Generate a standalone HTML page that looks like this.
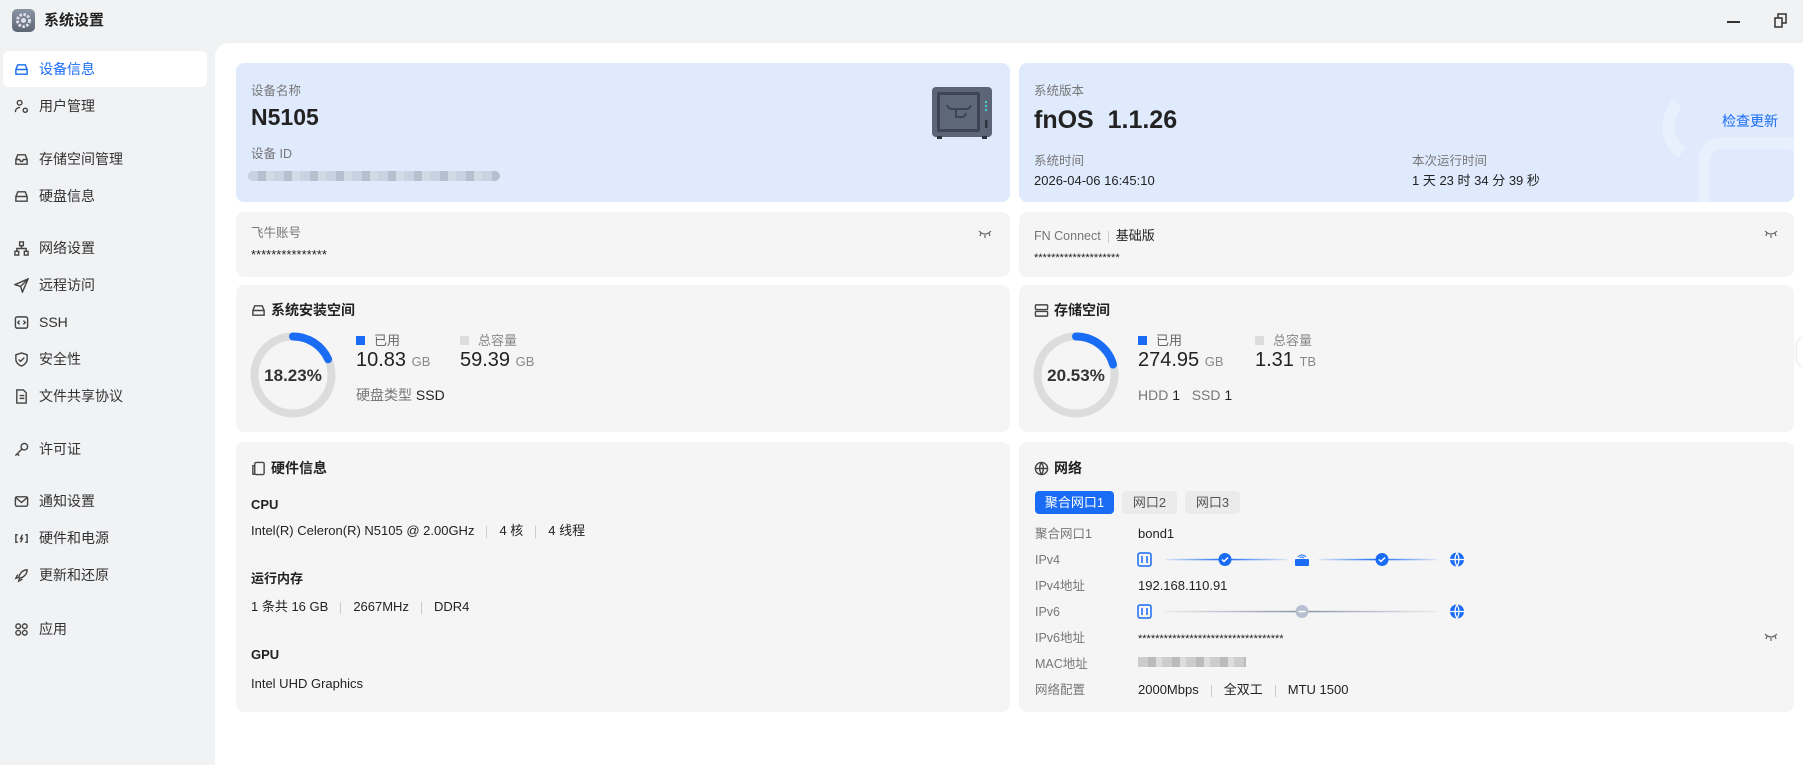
<!DOCTYPE html>
<html><head><meta charset="utf-8"><style>
*{margin:0;padding:0;box-sizing:border-box}
body{width:1803px;height:765px;background:#f1f2f4;font-family:"Liberation Sans","Noto Sans CJK SC",sans-serif;color:#222;position:relative;overflow:hidden;font-size:13px}
.a{position:absolute;white-space:nowrap;line-height:18px}
.side .it{position:absolute;left:3px;width:204px;height:36px;display:flex;align-items:center;padding-left:11px;font-size:14px;color:#333;border-radius:6px}
.side .it svg{width:15px;height:15px;margin-right:10px;stroke:#444;fill:none;stroke-width:1.5}
.side .act{background:#fff;color:#1a6cf5}
.side .act svg{stroke:#1a6cf5}
.main{position:absolute;left:215px;top:43px;width:1588px;height:722px;background:#fff;border-top-left-radius:14px}
.card{position:absolute;background:#f5f5f5;border-radius:8px}
.blue{background:#dfeafd}
.lbl{color:#777;font-size:12.5px}
.ttl{font-weight:bold;font-size:14px;display:flex;align-items:center}
.ttl svg{width:15px;height:15px;margin-right:5px;fill:none;stroke:#444;stroke-width:1.5}
.sep{display:inline-block;width:1px;height:12px;background:#ccc;margin:0 12px;vertical-align:middle}
</style></head><body>
<div class="a" style="left:12px;top:9px;width:23px;height:23px;border-radius:5px;background:linear-gradient(#8a94a3,#5d6675)"><svg width="23" height="23" viewBox="0 0 23 23"><circle cx="11.5" cy="11.5" r="6" fill="none" stroke="#dde" stroke-width="3" stroke-dasharray="2.5 1.5"/><circle cx="11.5" cy="11.5" r="2.5" fill="#dde"/></svg></div>
<div class="a" style="left:44px;top:12px;font-size:15px;font-weight:bold">系统设置</div>
<div class="a" style="left:1727px;top:21px;width:13px;height:1.6px;background:#333"></div>
<svg class="a" style="left:1774px;top:13px" width="13" height="15" viewBox="0 0 13 15" fill="none" stroke="#333" stroke-width="1.5"><rect x="1" y="5" width="7" height="9"/><path d="M4 5V1h8v9H8"/></svg>

<div class="side">
<div class="it act" style="top:51px"><svg viewBox="0 0 16 16"><path d="M2 8l2-5h8l2 5v5H2z M2 8h12"/></svg>设备信息</div>
<div class="it" style="top:88px"><svg viewBox="0 0 16 16"><circle cx="6" cy="4" r="2.5"/><path d="M1.5 14c0-3 2-5 5-5"/><circle cx="12" cy="12" r="2.2"/></svg>用户管理</div>
<div class="it" style="top:141px"><svg viewBox="0 0 16 16"><path d="M2 8l2-5h8l2 5v5H2z M2 8h4l1 2h2l1-2h4"/></svg>存储空间管理</div>
<div class="it" style="top:178px"><svg viewBox="0 0 16 16"><path d="M2 8l2-5h8l2 5v5H2z M2 8h12"/></svg>硬盘信息</div>
<div class="it" style="top:230px"><svg viewBox="0 0 16 16"><rect x="6" y="1" width="4" height="4"/><rect x="1" y="11" width="4" height="4"/><rect x="11" y="11" width="4" height="4"/><path d="M8 5v3M3 11V8h10v3"/></svg>网络设置</div>
<div class="it" style="top:267px"><svg viewBox="0 0 16 16"><path d="M15 1L1 7l6 2 2 6z M7 9l8-8"/></svg>远程访问</div>
<div class="it" style="top:304px"><svg viewBox="0 0 16 16"><rect x="1.5" y="2" width="13" height="12" rx="2"/><path d="M6 6l-2 2 2 2M10 6l2 2-2 2"/></svg>SSH</div>
<div class="it" style="top:341px"><svg viewBox="0 0 16 16"><path d="M8 1l6 2v5c0 3-3 6-6 7-3-1-6-4-6-7V3z M5 8l2 2 4-4"/></svg>安全性</div>
<div class="it" style="top:378px"><svg viewBox="0 0 16 16"><path d="M3 1h7l3 3v11H3z M6 7h5M6 10h5"/></svg>文件共享协议</div>
<div class="it" style="top:431px"><svg viewBox="0 0 16 16"><circle cx="11" cy="5" r="3.5"/><path d="M8.5 7.5L1.5 14.5M3.5 12.5l2 2"/></svg>许可证</div>
<div class="it" style="top:483px"><svg viewBox="0 0 16 16"><rect x="1.5" y="3" width="13" height="10" rx="1.5"/><path d="M2 4l6 5 6-5"/></svg>通知设置</div>
<div class="it" style="top:520px"><svg viewBox="0 0 16 16"><path d="M4 4H2v8h2M12 4h2v8h-2M9 4L7 8h2l-2 4"/></svg>硬件和电源</div>
<div class="it" style="top:557px"><svg viewBox="0 0 16 16"><path d="M14 2c-5 0-8 4-9 8l1 1c4-1 8-4 8-9z M5 10l-3 1 2-4M6 11l-1 3 4-2"/></svg>更新和还原</div>
<div class="it" style="top:611px"><svg viewBox="0 0 16 16"><circle cx="4.5" cy="4.5" r="2.5"/><circle cx="11.5" cy="4.5" r="2.5"/><circle cx="4.5" cy="11.5" r="2.5"/><circle cx="11.5" cy="11.5" r="2.5"/></svg>应用</div>
</div>

<div class="main"></div>

<!-- Row 1 -->
<div class="card blue" style="left:236px;top:63px;width:774px;height:139px">
 <div class="a lbl" style="left:15px;top:19px">设备名称</div>
 <div class="a" style="left:15px;top:40px;font-size:23px;font-weight:bold;line-height:28px">N5105</div>
 <div class="a lbl" style="left:15px;top:82px">设备 ID</div>
 <div class="a" style="left:12px;top:108px;width:252px;height:10px;border-radius:5px;background:repeating-linear-gradient(90deg,#c9d2e0 0 10px,#b6bfcd 10px 18px,#d2dae6 18px 26px)"></div>
 <svg class="a" style="left:696px;top:24px" width="60" height="52" viewBox="0 0 60 52"><rect x="0" y="0" width="60" height="50" rx="4" fill="#5b6577"/><rect x="5" y="5" width="43" height="40" rx="2" fill="#3d4554"/><rect x="8" y="8" width="37" height="34" fill="#5e6879"/><path d="M15 18q1 4 6 4h13q4 0 5-4M24 22v8h6q3 0 4-4" stroke="#3d4554" stroke-width="2" fill="none"/><circle cx="54" cy="15" r="1.2" fill="#4cc"/><circle cx="54" cy="19" r="1.2" fill="#4cc"/><circle cx="54" cy="23" r="1.2" fill="#4cc"/><rect x="53" y="33" width="2.5" height="8" fill="#2d3440"/><rect x="5" y="49" width="5" height="3" fill="#2d3440"/><rect x="50" y="49" width="5" height="3" fill="#2d3440"/></svg>
</div>
<div class="card blue" style="left:1019px;top:63px;width:775px;height:139px;overflow:hidden">
 <svg class="a" style="left:640px;top:30px" width="140" height="120" viewBox="0 0 140 120" fill="none" stroke="#e9f0fd" stroke-width="12"><path d="M18 10q-20 30 5 50"/><rect x="45" y="50" width="100" height="100" rx="18"/></svg>
 <div class="a lbl" style="left:15px;top:19px">系统版本</div>
 <div class="a" style="left:15px;top:42px;font-size:25px;font-weight:bold;line-height:30px">fnOS&nbsp; 1.1.26</div>
 <div class="a" style="left:703px;top:49px;color:#1a6cf5;font-size:14px">检查更新</div>
 <div class="a lbl" style="left:15px;top:89px">系统时间</div>
 <div class="a" style="left:15px;top:109px">2026-04-06 16:45:10</div>
 <div class="a lbl" style="left:393px;top:89px">本次运行时间</div>
 <div class="a" style="left:393px;top:109px">1 天 23 时 34 分 39 秒</div>
</div>

<!-- Row 2 -->
<div class="card" style="left:236px;top:212px;width:774px;height:65px">
 <div class="a lbl" style="left:15px;top:12px">飞牛账号</div>
 <div class="a" style="left:15px;top:34px">***************</div>
 <svg class="a" style="left:742px;top:17px" width="14" height="10" viewBox="0 0 14 10" fill="none" stroke="#666" stroke-width="1.2"><path d="M1 2q6 6 12 0M3 4L2 7M7 6v3M11 4l1 3"/></svg>
</div>
<div class="card" style="left:1019px;top:212px;width:775px;height:65px">
 <div class="a" style="left:15px;top:15px"><span class="lbl">FN Connect</span><span class="sep" style="margin:0 7px"></span>基础版</div>
 <div class="a" style="left:15px;top:37px;font-size:11px">********************</div>
 <svg class="a" style="left:745px;top:17px" width="14" height="10" viewBox="0 0 14 10" fill="none" stroke="#666" stroke-width="1.2"><path d="M1 2q6 6 12 0M3 4L2 7M7 6v3M11 4l1 3"/></svg>
</div>

<!-- Row 3 -->
<div class="card" style="left:236px;top:285px;width:774px;height:147px">
 <div class="a ttl" style="left:15px;top:16px"><svg viewBox="0 0 16 16"><path d="M2 8l2-5h8l2 5v5H2z M2 8h12"/></svg>系统安装空间</div>
 <svg class="a" style="left:14px;top:47px" width="86" height="86" viewBox="0 0 86 86"><circle cx="43" cy="43" r="38.5" fill="none" stroke="#dcdcdc" stroke-width="8"/><circle cx="43" cy="43" r="38.5" fill="none" stroke="#1a6cf5" stroke-width="8" stroke-dasharray="44.1 300" transform="rotate(-90 43 43)" stroke-linecap="round"/><text x="43" y="49" text-anchor="middle" font-size="17" font-weight="bold" fill="#333" font-family="Liberation Sans">18.23%</text></svg>
 <div class="a" style="left:120px;top:47px;font-size:13px;color:#666"><span style="display:inline-block;width:9px;height:9px;background:#1a6cf5;margin-right:9px"></span>已用</div>
 <div class="a" style="left:120px;top:63px;font-size:20px;line-height:24px">10.83 <span style="font-size:13px;color:#888">GB</span></div>
 <div class="a" style="left:224px;top:47px;font-size:13px;color:#888"><span style="display:inline-block;width:9px;height:9px;background:#dcdcdc;margin-right:9px"></span>总容量</div>
 <div class="a" style="left:224px;top:63px;font-size:20px;line-height:24px">59.39 <span style="font-size:13px;color:#888">GB</span></div>
 <div class="a" style="left:120px;top:101px;font-size:14px"><span style="color:#777">硬盘类型</span> SSD</div>
</div>
<div class="card" style="left:1019px;top:285px;width:775px;height:147px">
 <div class="a ttl" style="left:15px;top:16px"><svg viewBox="0 0 16 16"><rect x="1.5" y="2" width="13" height="5" rx="1"/><rect x="1.5" y="9" width="13" height="5" rx="1"/></svg>存储空间</div>
 <svg class="a" style="left:14px;top:47px" width="86" height="86" viewBox="0 0 86 86"><circle cx="43" cy="43" r="38.5" fill="none" stroke="#dcdcdc" stroke-width="8"/><circle cx="43" cy="43" r="38.5" fill="none" stroke="#1a6cf5" stroke-width="8" stroke-dasharray="49.7 300" transform="rotate(-90 43 43)" stroke-linecap="round"/><text x="43" y="49" text-anchor="middle" font-size="17" font-weight="bold" fill="#333" font-family="Liberation Sans">20.53%</text></svg>
 <div class="a" style="left:119px;top:47px;font-size:13px;color:#666"><span style="display:inline-block;width:9px;height:9px;background:#1a6cf5;margin-right:9px"></span>已用</div>
 <div class="a" style="left:119px;top:63px;font-size:20px;line-height:24px">274.95 <span style="font-size:13px;color:#888">GB</span></div>
 <div class="a" style="left:236px;top:47px;font-size:13px;color:#888"><span style="display:inline-block;width:9px;height:9px;background:#dcdcdc;margin-right:9px"></span>总容量</div>
 <div class="a" style="left:236px;top:63px;font-size:20px;line-height:24px">1.31 <span style="font-size:13px;color:#888">TB</span></div>
 <div class="a" style="left:119px;top:101px;font-size:14px"><span style="color:#777">HDD</span> 1 &nbsp; <span style="color:#777">SSD</span> 1</div>
</div>

<!-- Row 4 -->
<div class="card" style="left:236px;top:442px;width:774px;height:270px">
 <div class="a ttl" style="left:15px;top:17px"><svg viewBox="0 0 16 16"><rect x="4" y="1.5" width="10" height="13" rx="1.5"/><path d="M4 5H2v9h2"/></svg>硬件信息</div>
 <div class="a" style="left:15px;top:54px;font-weight:bold">CPU</div>
 <div class="a" style="left:15px;top:80px">Intel(R) Celeron(R) N5105 @ 2.00GHz<span class="sep"></span>4 核<span class="sep"></span>4 线程</div>
 <div class="a" style="left:15px;top:128px;font-weight:bold">运行内存</div>
 <div class="a" style="left:15px;top:156px">1 条共 16 GB<span class="sep"></span>2667MHz<span class="sep"></span>DDR4</div>
 <div class="a" style="left:15px;top:204px;font-weight:bold">GPU</div>
 <div class="a" style="left:15px;top:233px">Intel UHD Graphics</div>
</div>
<div class="card" style="left:1019px;top:442px;width:775px;height:270px">
 <div class="a ttl" style="left:15px;top:17px"><svg viewBox="0 0 16 16"><circle cx="8" cy="8" r="6.5"/><path d="M1.5 8h13M8 1.5q-4 6.5 0 13M8 1.5q4 6.5 0 13"/></svg>网络</div>
 <div class="a" style="left:16px;top:49px;width:79px;height:23px;border-radius:4px;background:#1a6cf5;color:#fff;font-size:13px;text-align:center;line-height:23px">聚合网口1</div>
 <div class="a" style="left:103px;top:49px;width:55px;height:23px;border-radius:4px;background:#ebebeb;color:#555;font-size:13px;text-align:center;line-height:23px">网口2</div>
 <div class="a" style="left:166px;top:49px;width:55px;height:23px;border-radius:4px;background:#ebebeb;color:#555;font-size:13px;text-align:center;line-height:23px">网口3</div>
 <div class="a lbl" style="left:16px;top:83px">聚合网口1</div><div class="a" style="left:119px;top:83px">bond1</div>
 <div class="a lbl" style="left:16px;top:109px">IPv4</div>
 <div class="a lbl" style="left:16px;top:135px">IPv4地址</div><div class="a" style="left:119px;top:135px">192.168.110.91</div>
 <div class="a lbl" style="left:16px;top:161px">IPv6</div>
 <div class="a lbl" style="left:16px;top:187px">IPv6地址</div><div class="a" style="left:119px;top:188px;font-size:11px">**********************************</div>
 <svg class="a" style="left:745px;top:190px" width="14" height="10" viewBox="0 0 14 10" fill="none" stroke="#666" stroke-width="1.2"><path d="M1 2q6 6 12 0M3 4L2 7M7 6v3M11 4l1 3"/></svg>
 <div class="a lbl" style="left:16px;top:213px">MAC地址</div><div class="a" style="left:119px;top:215px;width:108px;height:10px;background:repeating-linear-gradient(90deg,#ccc 0 10px,#bbb 10px 18px,#ddd 18px 24px)"></div>
 <div class="a lbl" style="left:16px;top:239px">网络配置</div><div class="a" style="left:119px;top:239px">2000Mbps<span class="sep"></span>全双工<span class="sep"></span>MTU 1500</div>
 <svg class="a" style="left:118px;top:108px" width="360" height="80" viewBox="0 0 360 80">
  <defs><linearGradient id="g1" gradientUnits="objectBoundingBox"><stop offset="0" stop-color="#1a6cf5" stop-opacity="0.1"/><stop offset=".5" stop-color="#1a6cf5"/><stop offset="1" stop-color="#1a6cf5" stop-opacity="0.1"/></linearGradient><linearGradient id="g2"><stop offset="0" stop-color="#8a93a8" stop-opacity="0.1"/><stop offset=".5" stop-color="#8a93a8"/><stop offset="1" stop-color="#8a93a8" stop-opacity="0.1"/></linearGradient></defs>
  <g fill="none" stroke="#1a6cf5" stroke-width="1.5"><rect x="1" y="3" width="13" height="13" rx="2"/><path d="M5 6v7M10 6v7"/></g>
  <rect x="28" y="8.8" width="122" height="1.5" fill="url(#g1)"/>
  <circle cx="88" cy="9.5" r="6.5" fill="#1a6cf5"/><path d="M85 9.5l2 2 4-4" stroke="#fff" fill="none" stroke-width="1.5"/>
  <rect x="158" y="9" width="14" height="7" rx="1" fill="#1a6cf5"/><path d="M161 7q4-4 8 0M163 8q2-2 4 0" stroke="#1a6cf5" fill="none"/>
  <rect x="182" y="8.8" width="118" height="1.5" fill="url(#g1)"/>
  <circle cx="245" cy="9.5" r="6.5" fill="#1a6cf5"/><path d="M242 9.5l2 2 4-4" stroke="#fff" fill="none" stroke-width="1.5"/>
  <circle cx="320" cy="9.5" r="7" fill="#1a6cf5"/><path d="M313 9.5h14M320 2.5q-4 7 0 14M320 2.5q4 7 0 14" stroke="#fff" fill="none" stroke-width="1.2"/>
  <g fill="none" stroke="#1a6cf5" stroke-width="1.5"><rect x="1" y="55" width="13" height="13" rx="2"/><path d="M5 58v7M10 58v7"/></g>
  <rect x="28" y="60.8" width="272" height="1.5" fill="url(#g2)"/>
  <circle cx="165" cy="61.5" r="6.5" fill="#b7c0d0"/><path d="M161.5 61.5h7" stroke="#fff" stroke-width="1.5"/>
  <circle cx="320" cy="61.5" r="7" fill="#1a6cf5"/><path d="M313 61.5h14M320 54.5q-4 7 0 14M320 54.5q4 7 0 14" stroke="#fff" fill="none" stroke-width="1.2"/>
 </svg>
</div>
<div class="a" style="left:1797px;top:338px;width:14px;height:28px;border-radius:14px;background:#fff;box-shadow:0 0 3px rgba(0,0,0,.2)"></div>
</body></html>
